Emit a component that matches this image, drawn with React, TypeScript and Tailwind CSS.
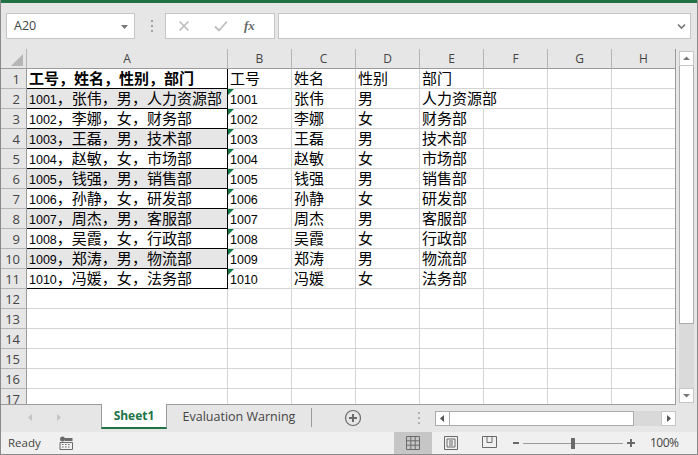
import React from 'react';

const sans = "font-['Open_Sans','Noto_Sans_CJK_SC',sans-serif]";

const people = [
  ['1001', '张伟', '男', '人力资源部'],
  ['1002', '李娜', '女', '财务部'],
  ['1003', '王磊', '男', '技术部'],
  ['1004', '赵敏', '女', '市场部'],
  ['1005', '钱强', '男', '销售部'],
  ['1006', '孙静', '女', '研发部'],
  ['1007', '周杰', '男', '客服部'],
  ['1008', '吴霞', '女', '行政部'],
  ['1009', '郑涛', '男', '物流部'],
  ['1010', '冯媛', '女', '法务部'],
];

const cols = ['A', 'B', 'C', 'D', 'E', 'F', 'G', 'H'];
const rowNums = Array.from({ length: 17 }, (_, i) => i + 1);

const Digits: React.FC<{ children: React.ReactNode }> = ({ children }) => (
  <span className="font-['Liberation_Sans',sans-serif] text-[12.5px]">{children}</span>
);

const Cell: React.FC<{ children?: React.ReactNode; className?: string }> = ({ children, className = '' }) => (
  <div className={`relative h-[20px] border-r border-b border-b-[#d4d4d4] pl-[2px] text-[15px] leading-[18px] text-black whitespace-nowrap ${className || 'border-r-[#d4d4d4]'}`}>
    {children}
  </div>
);

const ColHead: React.FC<{ label: string }> = ({ label }) => (
  <div className={`h-[20px] border-r border-b border-r-[#b5b5b5] border-b-[#9b9b9b] bg-[#e6e6e6] text-center text-[12px] leading-[19px] text-[#444] ${sans}`}>
    {label}
  </div>
);

const RowHead: React.FC<{ n: number }> = ({ n }) => (
  <div className={`h-[20px] border-r border-b border-r-[#9b9b9b] border-b-[#b5b5b5] bg-[#e6e6e6] pr-[6px] text-right text-[13px] leading-[20px] text-[#444] ${sans}`}>
    {n}
  </div>
);

const Row: React.FC<{ n: number }> = ({ n }) => {
  const cellA = 'border-r-black !border-b-black';
  let cells: React.ReactNode[];
  if (n === 1) {
    cells = [
      <Cell key="a" className={`${cellA} font-bold`}>工号，姓名，性别，部门</Cell>,
      <Cell key="b">工号</Cell>,
      <Cell key="c">姓名</Cell>,
      <Cell key="d">性别</Cell>,
      <Cell key="e">部门</Cell>,
    ];
  } else if (n <= 11) {
    const [id, name, sex, dept] = people[n - 2];
    cells = [
      <Cell key="a" className={`${cellA} ${n % 2 === 0 ? 'bg-[#e7e6e6]' : ''}`}>
        <Digits>{id}</Digits>，{name}，{sex}，{dept}
      </Cell>,
      <Cell key="b">
        <span className="absolute left-0 top-0 h-0 w-0 border-t-[6px] border-r-[6px] border-t-[#107c41] border-r-transparent" />
        <Digits>{id}</Digits>
      </Cell>,
      <Cell key="c">{name}</Cell>,
      <Cell key="d">{sex}</Cell>,
      <Cell key="e" className={n === 2 ? 'border-r-transparent' : ''}>{dept}</Cell>,
    ];
  } else {
    cells = ['a', 'b', 'c', 'd', 'e'].map((k) => <Cell key={k} />);
  }
  return (
    <>
      <RowHead n={n} />
      {cells}
      <Cell />
      <Cell />
      <Cell />
    </>
  );
};

const ArrowTri: React.FC<{ d: string; className?: string }> = ({ d, className = '' }) => (
  <svg width="9" height="9" viewBox="0 0 9 9" className={className}>
    <path d={d} fill="currentColor" />
  </svg>
);

export default function App() {
  return (
    <div className="flex h-[455px] w-[698px] flex-col overflow-hidden border-x border-b border-[#8a8a8a] bg-[#e6e6e6] font-['Noto_Sans_CJK_SC',sans-serif]">
      <div className="h-[3px] shrink-0 bg-[#217346]" />

      {/* formula bar */}
      <div className="flex h-[46px] shrink-0 items-start pl-[5px] pr-[6px] pt-[10px]">
        <div className={`flex h-[26px] w-[129px] items-center justify-between border border-[#c6c6c6] bg-white pl-[7px] pr-[5px] text-[12.5px] text-[#444] ${sans}`}>
          A20
          <ArrowTri d="M1 3h7L4.5 7z" className="text-[#777]" />
        </div>
        <div className="ml-[15px] flex h-[26px] w-[4px] flex-col items-center justify-center gap-[3px]">
          <span className="h-[2px] w-[2px] bg-[#a0a0a0]" />
          <span className="h-[2px] w-[2px] bg-[#a0a0a0]" />
          <span className="h-[2px] w-[2px] bg-[#a0a0a0]" />
        </div>
        <div className="ml-[11px] flex h-[26px] w-[110px] items-center border border-[#c6c6c6] bg-white">
          <svg width="12" height="12" viewBox="0 0 12 12" className="ml-[12px]">
            <path d="M1.5 1.5l9 9M10.5 1.5l-9 9" stroke="#bdbdbd" strokeWidth="1.7" fill="none" />
          </svg>
          <svg width="14" height="12" viewBox="0 0 14 12" className="ml-[24px]">
            <path d="M1 6.5l4 4L13 1.5" stroke="#bdbdbd" strokeWidth="1.8" fill="none" />
          </svg>
          <span className="ml-[16px] font-['Liberation_Serif',serif] text-[13px] font-bold italic text-[#6a6a6a]">fx</span>
        </div>
        <div className="ml-[3px] flex h-[26px] flex-1 items-center justify-end border border-[#c6c6c6] bg-white pr-[4px]">
          <svg width="9" height="7" viewBox="0 0 9 7">
            <path d="M1 1.5l3.5 3.5L8 1.5" stroke="#777" strokeWidth="1.7" fill="none" />
          </svg>
        </div>
      </div>

      {/* sheet + vertical scrollbar */}
      <div className="flex h-[356px] shrink-0">
        <div className="h-full w-[675px] shrink-0 overflow-hidden border-r border-b border-[#9b9b9b] bg-white">
          <div className="grid w-[675px] grid-cols-[26px_201px_64px_64px_64px_64px_64px_64px_64px]">
            <div className="relative h-[20px] border-r border-b border-r-[#b5b5b5] border-b-[#9b9b9b] bg-[#e6e6e6]">
              <span className="absolute bottom-[2px] right-[3px] h-0 w-0 border-b-[12px] border-l-[12px] border-b-[#b5b5b5] border-l-transparent" />
            </div>
            {cols.map((c) => (
              <ColHead key={c} label={c} />
            ))}
            {rowNums.map((n) => (
              <Row key={n} n={n} />
            ))}
          </div>
        </div>
        <div className="ml-[3px] mt-[2px] flex h-[352px] w-[15px] shrink-0 flex-col bg-[#dadada]">
          <div className="flex h-[15px] items-center justify-center border border-[#c6c6c6] bg-white text-[#777]">
            <ArrowTri d="M1 6h7L4.5 2.5z" />
          </div>
          <div className="h-[258px] border-x border-b border-[#ababab] bg-white" />
          <div className="flex-1" />
          <div className="flex h-[15px] items-center justify-center border border-[#c6c6c6] bg-white text-[#777]">
            <ArrowTri d="M1 3h7L4.5 6.5z" />
          </div>
        </div>
      </div>

      {/* sheet tabs */}
      <div className="flex h-[27px] shrink-0 items-start">
        <div className="flex w-[100px] items-center pt-[8px] text-[#c4c4c4]">
          <ArrowTri d="M6 1v7L2 4.5z" className="ml-[25px]" />
          <ArrowTri d="M3 1v7l4-3.5z" className="ml-[19px]" />
        </div>
        <div className={`-mt-[1px] flex h-[25px] w-[66px] items-center justify-center border-x border-x-[#9b9b9b] border-b-2 border-b-[#217346] bg-white text-[12px] font-bold text-[#217346] ${sans}`}>
          Sheet1
        </div>
        <div className={`flex h-[24px] w-[144px] items-center justify-center text-[12.5px] text-[#444] ${sans}`}>
          Evaluation Warning
        </div>
        <span className="mt-[3px] h-[19px] w-[1px] bg-[#9b9b9b]" />
        <svg width="18" height="18" viewBox="0 0 18 18" className="ml-[32px] mt-[4px]">
          <circle cx="9" cy="9" r="7.5" stroke="#6a6a6a" strokeWidth="1.2" fill="none" />
          <path d="M9 5v8M5 9h8" stroke="#6a6a6a" strokeWidth="2" />
        </svg>
        <div className="ml-[56px] mt-[7px] flex flex-col gap-[3px]">
          <span className="h-[2px] w-[2px] bg-[#b0b0b0]" />
          <span className="h-[2px] w-[2px] bg-[#b0b0b0]" />
          <span className="h-[2px] w-[2px] bg-[#b0b0b0]" />
        </div>
        <div className="ml-[15px] mt-[6px] flex h-[15px] w-[241px] bg-[#d9d9d9]">
          <div className="flex w-[15px] items-center justify-center border border-[#ababab] bg-white text-[#555]">
            <ArrowTri d="M6 1v7L2 4.5z" />
          </div>
          <div className="w-[184px] border-y border-r border-[#ababab] bg-white" />
          <div className="flex-1" />
          <div className="flex w-[15px] items-center justify-center border border-[#c6c6c6] bg-white text-[#555]">
            <ArrowTri d="M3 1v7l4-3.5z" />
          </div>
        </div>
      </div>

      {/* status bar */}
      <div className={`flex h-[22px] shrink-0 items-center bg-[#f0f0f0] text-[#444] ${sans}`}>
        <span className="ml-[7px] w-[31px] text-[11.5px]">Ready</span>
        <svg width="14" height="14" viewBox="0 0 14 14" className="ml-[20px]">
          <circle cx="3.5" cy="3" r="2.5" fill="#6a6a6a" />
          <path d="M1 6.5h12.5v7H1z" fill="none" stroke="#6a6a6a" />
          <path d="M6 2h7.5v3H6z" fill="#6a6a6a" />
          <path d="M3 8.5h1.5M6 8.5h1.5M9 8.5h1.5M3 11h1.5M6 11h1.5M9 11h1.5" stroke="#6a6a6a" />
        </svg>
        <div className="ml-[321px] flex h-full w-[38px] items-center justify-center bg-[#c6c6c6]">
          <svg width="14" height="14" viewBox="0 0 14 14">
            <path d="M.5.5h13v13H.5zM.5 4.8h13M.5 9.2h13M4.8.5v13M9.2.5v13" stroke="#6a6a6a" fill="none" />
          </svg>
        </div>
        <svg width="14" height="14" viewBox="0 0 14 14" className="ml-[12px]">
          <path d="M.5.5h13v13H.5zM3 3h8v8H3zM5 5h4M5 7h4M5 9h4" stroke="#6a6a6a" fill="none" />
        </svg>
        <svg width="15" height="12" viewBox="0 0 15 12" className="ml-[24px] -mt-[3px]">
          <path d="M.5.5h14v11H.5zM5 .5v6h5v-6" stroke="#6a6a6a" fill="none" />
        </svg>
        <span className="ml-[16px] h-[2px] w-[6px] bg-[#6a6a6a]" />
        <div className="relative ml-[4px] h-[1px] w-[100px] bg-[#9b9b9b]">
          <span className="absolute left-[48px] top-[-5px] h-[11px] w-[4px] bg-[#6a6a6a]" />
        </div>
        <svg width="8" height="8" viewBox="0 0 8 8" className="ml-[4px]">
          <path d="M4 0v8M0 4h8" stroke="#6a6a6a" strokeWidth="2" />
        </svg>
        <span className="ml-[15px] text-[12px] tracking-[-0.5px]">100%</span>
      </div>
    </div>
  );
}
